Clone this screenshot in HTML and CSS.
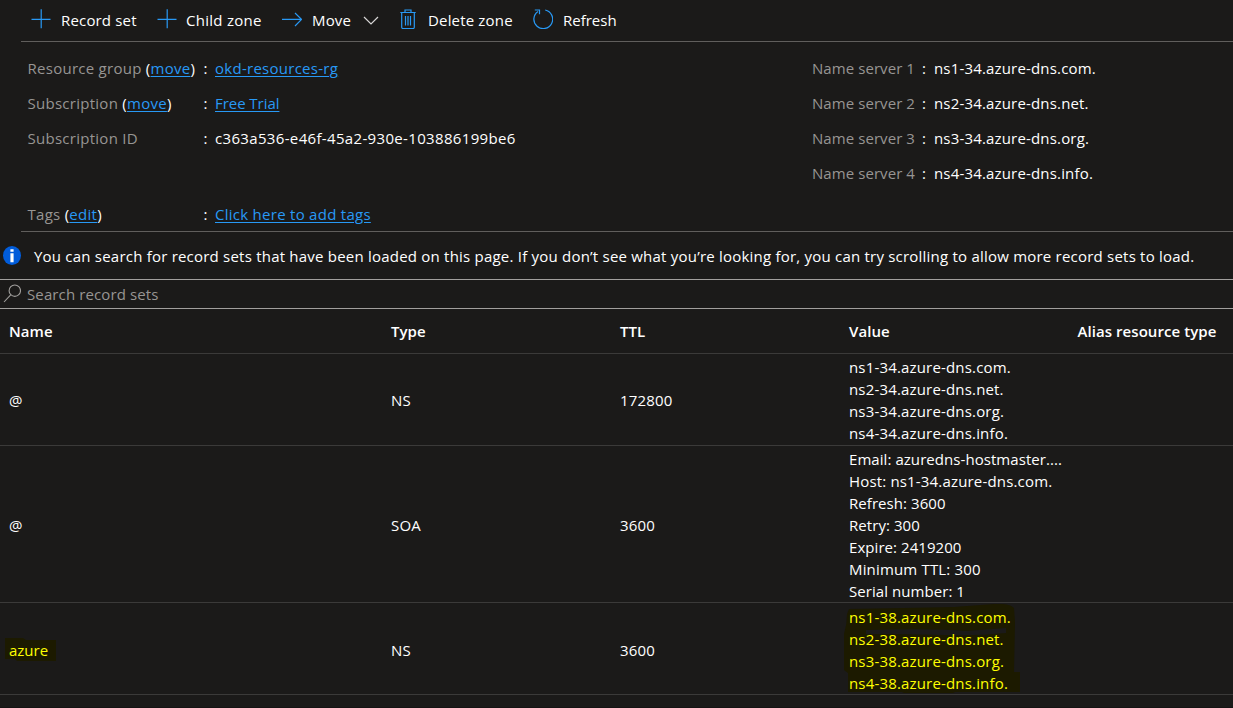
FILE: index.html
```html
<!DOCTYPE html>
<html lang="en">
<head>
<meta charset="utf-8">
<title>DNS zone</title>
<link rel="stylesheet" href="styles.css">
</head>
<body>
<nav class="toolbar">
  <button class="command record"><svg class="icon" viewBox="0 0 20 20"><path d="M10.2 0.3v19M0.5 10.4h19"/></svg><span>Record set</span></button>
  <button class="command child"><svg class="icon" viewBox="0 0 20 20"><path d="M10.2 0.3v19M0.5 10.4h19"/></svg><span>Child zone</span></button>
  <button class="command move"><svg class="icon arrow" viewBox="0 0 20 20"><path d="M0 10.4h19.5M13 4l6.5 6.4L13 17"/></svg><span>Move</span><svg class="chevron" viewBox="0 0 16 10"><path d="M1 1l7 7 7-7"/></svg></button>
  <button class="command delete"><svg class="icon" viewBox="0 0 20 20"><path d="M2.3 3.5h15.4M7 3V1h6v2M3.7 4v14.3q0 1.2 1.2 1.2h10.2q1.2 0 1.2-1.2V4M7.5 7v9.5M10 7v9.5M12.5 7v9.5"/></svg><span>Delete zone</span></button>
  <button class="command refresh"><svg class="icon" viewBox="0 0 20 20"><path d="M12.2 1A9.4 9.4 0 1 1 5 2.4M1.8 1H6.5V5.2"/></svg><span>Refresh</span></button>
</nav>
<section class="essentials">
  <dl class="props">
    <div class="prop"><dt>Resource group <b>(<a>move</a>)</b></dt><dd class="colon">:</dd><dd><a>okd-resources-rg</a></dd></div>
    <div class="prop"><dt>Subscription <b>(<a>move</a>)</b></dt><dd class="colon">:</dd><dd class="plan"><a>Free Trial</a></dd></div>
    <div class="prop"><dt>Subscription ID</dt><dd class="colon">:</dd><dd class="guid">c363a536-e46f-45a2-930e-103886199be6</dd></div>
    <div class="prop tags"><dt>Tags <b>(<a>edit</a>)</b></dt><dd class="colon">:</dd><dd><a>Click here to add tags</a></dd></div>
  </dl>
  <dl class="servers">
    <div class="prop"><dt>Name server 1</dt><dd class="colon">:</dd><dd>ns1-34.azure-dns.com.</dd></div>
    <div class="prop"><dt>Name server 2</dt><dd class="colon">:</dd><dd>ns2-34.azure-dns.net.</dd></div>
    <div class="prop"><dt>Name server 3</dt><dd class="colon">:</dd><dd>ns3-34.azure-dns.org.</dd></div>
    <div class="prop"><dt>Name server 4</dt><dd class="colon">:</dd><dd>ns4-34.azure-dns.info.</dd></div>
  </dl>
</section>
<div class="notice">
  <svg class="info" viewBox="0 0 18 19"><ellipse cx="9" cy="9.5" rx="9" ry="9.5"/><path d="M7.4 3.2h3.2v2.6H7.4zM7.4 7.2h3.2v9H7.4z"/></svg>
  <span>You can search for record sets that have been loaded on this page. If you don’t see what you’re looking for, you can try scrolling to allow more record sets to load.</span>
</div>
<div class="search">
  <svg class="lens" viewBox="0 0 18 19"><circle cx="11.8" cy="6.7" r="5.7"/><path d="M7.7 10.8L1 18"/></svg>
  <span>Search record sets</span>
</div>
<main class="grid">
  <div class="row head"><div>Name</div><div>Type</div><div>TTL</div><div>Value</div><div class="alias">Alias resource type</div></div>
  <div class="row ns"><div>@</div><div>NS</div><div>172800</div><div class="values"><p>ns1-34.azure-dns.com.</p><p>ns2-34.azure-dns.net.</p><p>ns3-34.azure-dns.org.</p><p>ns4-34.azure-dns.info.</p></div></div>
  <div class="row soa"><div>@</div><div>SOA</div><div>3600</div><div class="values"><p class="tight">Email: azuredns-hostmaster....</p><p>Host: ns1-34.azure-dns.com.</p><p class="tight">Refresh: 3600</p><p class="tight">Retry: 300</p><p class="tight">Expire: 2419200</p><p>Minimum TTL: 300</p><p class="tight">Serial number: 1</p></div></div>
  <div class="row ns last">
    <div class="marked name"><svg class="marker marker-name" viewBox="0 0 51 23"><path d="M0 0h18l3 2h30v21H12l-2-2H0z"/></svg><span>azure</span></div>
    <div>NS</div><div>3600</div>
    <div class="values marked"><svg class="marker marker-values" viewBox="0 0 176 90"><path d="M5 5Q60 4 110 3L150 0q15-1 20 4l1 14-1 50h6v20h-65l-2 1H60l-2-1H4V69L0 66V30q3-10 3-20z"/><path class="gap" d="M22 26q70-2 100 1l40-3v5q-30 3-60 2-40-1-80-1z"/></svg><p>ns1-38.azure-dns.com.</p><p>ns2-38.azure-dns.net.</p><p>ns3-38.azure-dns.org.</p><p>ns4-38.azure-dns.info.</p></div>
  </div>
</main>
</body>
</html>
```

FILE: styles.css
```css
* { box-sizing: border-box; }
body {
  margin: 0;
  height: 708px;
  overflow: hidden;
  background: #1b1a19;
  color: #fff;
  font: 15px/22px "Segoe UI", "Open Sans", "Noto Sans", sans-serif;
  letter-spacing: 0.17px;
  white-space: nowrap;
  border-bottom: 1px solid #151313;
}
dl, dd, p { margin: 0; }
svg { display: block; flex: none; fill: none; }
a { color: #2899f5; text-decoration: underline; text-underline-offset: 2px; }
.toolbar { display: flex; height: 42px; margin-left: 21px; padding-left: 10px; border-bottom: 1px solid #605e5c; }
.command { display: flex; align-items: flex-start; gap: 10px; padding: 9px 0 0; border: 0; background: none; color: inherit; font: inherit; letter-spacing: inherit; }
.icon { width: 20px; height: 20px; stroke: #2899f5; stroke-width: 1.2; }
.record { width: 126px; }
.child { width: 125px; gap: 9px; letter-spacing: 0.28px; }
.move { width: 116px; }
.move .chevron { margin-left: 2px; }
.delete { width: 135px; }
.refresh { letter-spacing: 0; }
.chevron { width: 16px; height: 10px; margin-top: 7px; stroke: #d8d7d6; stroke-width: 1.2; }
.essentials { display: flex; justify-content: space-between; height: 190px; margin-left: 21px; padding: 15px 0 0 6.5px; border-bottom: 1px solid #605e5c; }
.prop { display: flex; height: 35px; }
.prop dt { width: 176px; color: #979593; }
.prop b { color: #fff; font-weight: 400; }
.prop .colon { width: 11.5px; }
.props { letter-spacing: 0.27px; }
.guid { letter-spacing: 0.34px; }
.plan { letter-spacing: -0.05px; }
.tags { margin-top: 41px; }
.servers { width: 421px; }
.servers dt { width: 110px; letter-spacing: 0.07px; }
.servers .colon { width: 12px; }
.notice { display: flex; height: 47px; padding: 13px 0 0 3px; gap: 13px; letter-spacing: 0.216px; }
.info { width: 18px; height: 19px; margin-top: 1px; fill: #015cda; }
.info path { fill: #fff; }
.search { display: flex; gap: 6px; height: 30px; padding: 3px 0 0 3px; border: solid #a19f9d; border-width: 1px 0; color: #979593; letter-spacing: 0.12px; }
.lens { width: 18px; height: 19px; margin-top: 1px; stroke: #a19f9d; stroke-width: 1.1; }
.row { display: grid; grid-template-columns: 382px 229px 229px 228.5px 1fr; align-items: center; padding-left: 9px; border-bottom: 1px solid #3b3a39; }
.head { height: 45px; font-weight: 600; letter-spacing: 0.06px; }
.ns { height: 92px; }
.soa { height: 157px; padding-top: 2px; }
.last { padding-top: 2px; }
.tight { letter-spacing: 0.06px; }
.marked { position: relative; color: #ff0; }
.marked span, .marked p { position: relative; }
.name { letter-spacing: 0; }
.marker { position: absolute; fill: #1c1a00; }
.marker-name { left: -4px; top: -1px; width: 51px; height: 23px; }
.marker-values { left: -5px; top: -2px; width: 176px; height: 90px; }
.marker .gap { fill: #1b1a19; }
```
